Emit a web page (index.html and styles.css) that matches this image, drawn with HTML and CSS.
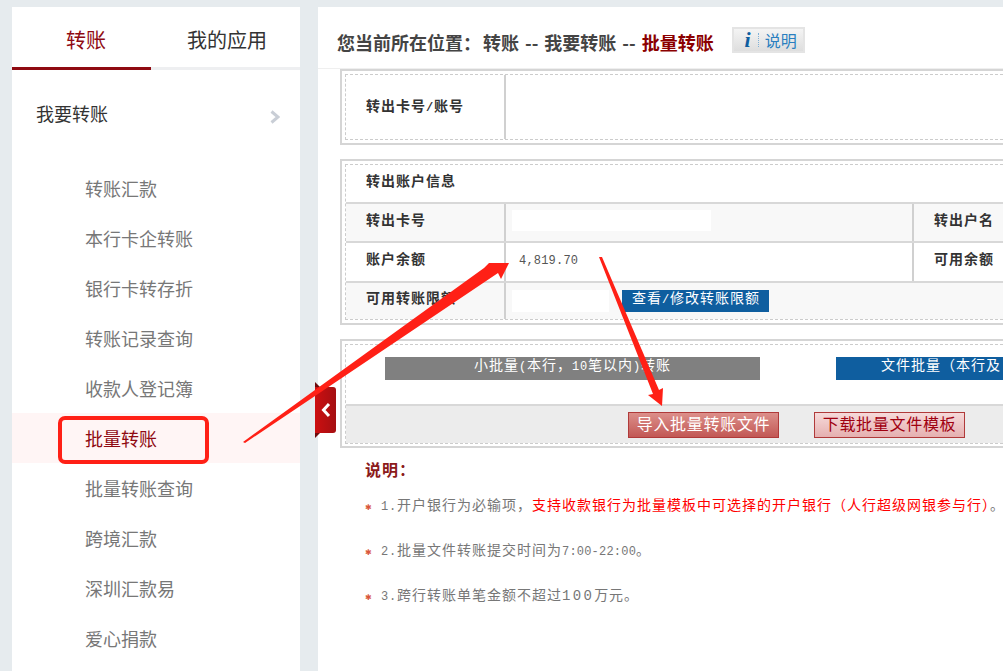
FILE: index.html
```html
<!DOCTYPE html>
<html lang="zh-CN">
<head>
<meta charset="utf-8">
<title>批量转账</title>
<link rel="stylesheet" href="styles.css">
</head>
<body>
<div class="page">
  <aside class="sidebar">
    <div class="tabs">
      <div class="tab tab-on">转账</div>
      <div class="tab">我的应用</div>
    </div>
    <div class="group">
      <span>我要转账</span>
      <svg class="chev" width="10" height="14" viewBox="0 0 10 14"><polyline points="1.5,1.5 8,7 1.5,12.5" fill="none" stroke="#c9ced6" stroke-width="3"/></svg>
    </div>
    <ul class="menu">
      <li>转账汇款</li>
      <li>本行卡企转账</li>
      <li>银行卡转存折</li>
      <li>转账记录查询</li>
      <li>收款人登记簿</li>
      <li class="menu-on">批量转账</li>
      <li>批量转账查询</li>
      <li>跨境汇款</li>
      <li>深圳汇款易</li>
      <li>爱心捐款</li>
    </ul>
  </aside>
  <main class="main">
    <header class="crumbs">
      <span class="crumb-lead">您当前所在位置：</span>
      <span>转账</span><span>--</span><span>我要转账</span><span>--</span>
      <span class="crumb-now">批量转账</span>
      <div class="help">
        <span class="help-i">i</span>
        <span class="help-dots"></span>
        <span class="help-txt">说明</span>
      </div>
    </header>

    <section class="box">
      <div class="inner">
        <div class="row row-card">
          <div class="label">转出卡号<span class="n">/</span>账号</div>
          <div class="value value-wide"></div>
        </div>
      </div>
    </section>

    <section class="box box-info">
      <div class="inner">
        <div class="title">转出账户信息</div>
        <div class="row row-a shade">
          <div class="label">转出卡号</div>
          <div class="value"><span class="mask mask-long"></span></div>
          <div class="label label-r">转出户名</div>
        </div>
        <div class="row row-b">
          <div class="label">账户余额</div>
          <div class="value"><span class="n amount">4,819.70</span></div>
          <div class="label label-r">可用余额</div>
        </div>
        <div class="row row-c shade">
          <div class="label">可用转账限额</div>
          <div class="value value-wide"><span class="mask mask-short"></span><span class="limit-btn">查看<span class="n">/</span>修改转账限额</span></div>
        </div>
      </div>
    </section>

    <section class="box box-batch">
      <div class="inner">
        <div class="modes">
          <div class="mode mode-gray">小批量<span class="n">(</span>本行，<span class="n">10</span>笔以内<span class="n">)</span>转账</div>
          <div class="mode mode-blue">文件批量（本行及</div>
        </div>
        <div class="actions">
          <div class="btn btn-main">导入批量转账文件</div>
          <div class="btn btn-alt">下载批量文件模板</div>
        </div>
      </div>
    </section>

    <section class="notes">
      <h2 class="notes-h">说明：</h2>
      <p class="note"><span class="star">✱</span><span class="n">1.</span>开户银行为必输项，<span class="hot">支持收款银行为批量模板中可选择的开户银行（人行超级网银参与行）</span>。</p>
      <p class="note"><span class="star">✱</span><span class="n">2.</span>批量文件转账提交时间为<span class="n n-tight">7:00-22:00</span>。</p>
      <p class="note"><span class="star">✱</span><span class="n">3.</span>跨行转账单笔金额不超过<span class="n n-wide">100</span>万元。</p>
    </section>
  </main>
</div>

<div class="toggle">
  <svg width="12" height="16" viewBox="0 0 12 16"><polyline points="9,2 3.5,8 9,14" fill="none" stroke="#fff" stroke-width="3"/></svg>
</div>

<svg class="marks" width="1003" height="671" viewBox="0 0 1003 671">
  <rect x="60" y="418" width="147" height="44" rx="5" fill="none" stroke="#ff2016" stroke-width="4"/>
  <polygon fill="#ff2016" points="243,442 484,268 489,263 509,263 501,279 498,273 245,443"/>
  <polygon fill="#ff2016" points="599,257 602,257 659,390 663,388 662,406 648,395 653,394"/>
</svg>
</body>
</html>
```
FILE: styles.css
```css
* { box-sizing: border-box; }
html, body { margin: 0; height: 671px; overflow: hidden; }
body {
  background: #e6ebee;
  font-family: "Noto Sans CJK SC", "Liberation Sans", sans-serif;
  position: relative;
}
.page { display: flex; gap: 18px; padding: 7px 0 0 12px; height: 671px; }

/* sidebar */
.sidebar { width: 288px; flex: none; background: #fff; }
.tabs { display: flex; height: 63px; border-bottom: 3px solid #eeeff1; }
.tab {
  width: 140px; height: 63px; line-height: 66px; text-align: center;
  font-size: 20px; color: #333; border-bottom: 3px solid transparent;
}
.tab-on { color: #8f0a12; border-bottom-color: #8f0a12; padding-left: 9px; }
.tab + .tab { width: 150px; padding-left: 3px; }
.group {
  display: flex; align-items: center; justify-content: space-between;
  height: 50px; margin-top: 18px; padding: 0 20px 0 25px;
  font-size: 18px; color: #333;
}
.group span { margin-left: -1px; }
.chev { display: block; margin-top: 7px; }
.menu { list-style: none; margin: 25px 0 0; padding: 0; }
.menu li {
  height: 50px; line-height: 50px; padding-left: 73px;
  font-size: 18px; color: #777;
}
.menu .menu-on { background: #fff5f5; color: #8f0a12; }

/* main */
.main { flex: 1; min-width: 0; background: #fff; overflow: hidden; }
.crumbs {
  display: flex; align-items: center; gap: 6px;
  width: 100%; height: 62px; padding: 8px 0 0 19px;
  border-bottom: 1px solid #efefef;
  font-size: 18px; font-weight: 700; color: #444;
  white-space: nowrap;
}
.crumb-lead { width: 140px; }
.crumb-now { color: #8b0000; }
.help {
  display: flex; align-items: center; width: 73px; height: 26px; margin: -4px 0 0 12px;
  border: 2px solid #e4e4e4; background: linear-gradient(#f4f4f4, #dedede);
  font-weight: 400;
}
.help-i {
  width: 17px; text-align: right; color: #0f5e9f;
  font: italic 700 22px "Liberation Serif", serif;
}
.help-dots { width: 0; height: 14px; margin: 0 6px 0 7px; border-left: 1px dotted #7fb0d6; }
.help-txt { font-size: 16px; color: #2a7fc0; line-height: 22px; }

.box {
  width: 760px; margin-left: 22px; padding: 3px 0 3px 3px;
  border: 2px solid #d5d5d5;
  font-size: 14px; letter-spacing: 1px; color: #333;
}
.box + .box { margin-top: 14px; }
.inner { border: 1px dashed #ccc; border-right: 0; }
.row { display: flex; border-top: 2px solid #d8d8d8; }
.shade { background: #f8f8f8; }
.label { width: 160px; flex: none; padding-left: 20px; font-weight: 700; border-right: 2px solid #d0d0d0; }
.value { width: 408px; flex: none; border-right: 2px solid #d0d0d0; }
.value-wide { width: auto; flex: 1; border-right: 0; }
.label-r { width: auto; flex: 1; border-right: 0; }

.row-card { height: 64px; border-top: 0; }
.row-card .label { line-height: 60px; }
.title { height: 37px; line-height: 30px; padding-left: 20px; font-weight: 700; }
.row-a { height: 39px; line-height: 30px; }
.row-b { height: 40px; line-height: 30px; }
.row-c { height: 38px; line-height: 29px; }
.row-b .value { line-height: 36px; }
.row-a .value { display: flex; align-items: flex-start; padding: 6px 0 0 6px; }
.row-c .value { display: flex; align-items: flex-start; padding: 7px 0 0 6px; }
.mask { display: block; background: #fff; }
.mask-long { width: 199px; height: 21px; }
.mask-short { width: 97px; height: 22px; }
.limit-btn {
  height: 22px; line-height: 15px; margin-left: 13px; padding: 0 9px 0 10px;
  background: #0f5e9f; color: #fff; font-weight: 400; white-space: nowrap;
}
.n { font-family: "Liberation Mono", monospace; font-size: 12px; letter-spacing: .8px; }
.amount { display: block; padding-left: 13px; color: #555; letter-spacing: .2px; }
.n-tight { letter-spacing: .2px; }
.n-wide { font-size: 14px; letter-spacing: 2.300px; }

.box-batch { padding-bottom: 2px; }
.modes { display: flex; gap: 76px; height: 61px; padding: 12px 0 0 39px; border-bottom: 2px solid #d8d8d8; }
.mode {
  flex: none; height: 23px; line-height: 15px; text-align: center;
  color: #fff; white-space: nowrap;
}
.mode-gray { width: 375px; background: #808080; }
.mode-blue { width: 375px; background: #0f5e9f; text-align: left; padding-left: 45px; }
.actions { display: flex; gap: 35px; height: 37px; padding: 6px 0 0 282px; background: #ececec; }
.btn {
  width: 151px; height: 26px; line-height: 20px; text-align: center;
  font-size: 16px; letter-spacing: .7px; white-space: nowrap;
  border: 1px solid #b03a3a;
}
.btn-main { background: linear-gradient(#dc8f8a, #c25855); color: #fff; }
.btn-alt { background: linear-gradient(#f6dada, #e5b0b0); color: #a00010; }

.notes { padding: 10px 0 0 47px; letter-spacing: 1px; font-size: 14px; color: #777; white-space: nowrap; }
.notes-h { margin: 0 0 14px; font-size: 16px; line-height: 22px; font-weight: 700; color: #8b1a1a; }
.note { margin: 0 0 25px; height: 20px; line-height: 20px; }
.note .n { color: #777; }
.hot { color: #f00; }
.star { display: inline-block; width: 16px; font-size: 8px; color: #d9583c; letter-spacing: 0; }

/* overlays */
.toggle {
  position: absolute; left: 315px; top: 387px; width: 21px; height: 46px;
  display: flex; align-items: center; justify-content: center;
  background: linear-gradient(90deg, #cc0f10, #a50f12); border-radius: 0 3px 3px 0;
}
.toggle::before, .toggle::after {
  content: ""; position: absolute; left: 0; width: 0; height: 0;
  border-left: 5px solid transparent; border-right: 0 solid transparent;
}
.toggle::before { top: -5px; border-left: 5px solid #6d0a0c; border-top: 5px solid transparent; }
.toggle::after { bottom: -5px; border-left: 5px solid #6d0a0c; border-bottom: 5px solid transparent; }
.marks { position: absolute; left: 0; top: 0; pointer-events: none; }
```
